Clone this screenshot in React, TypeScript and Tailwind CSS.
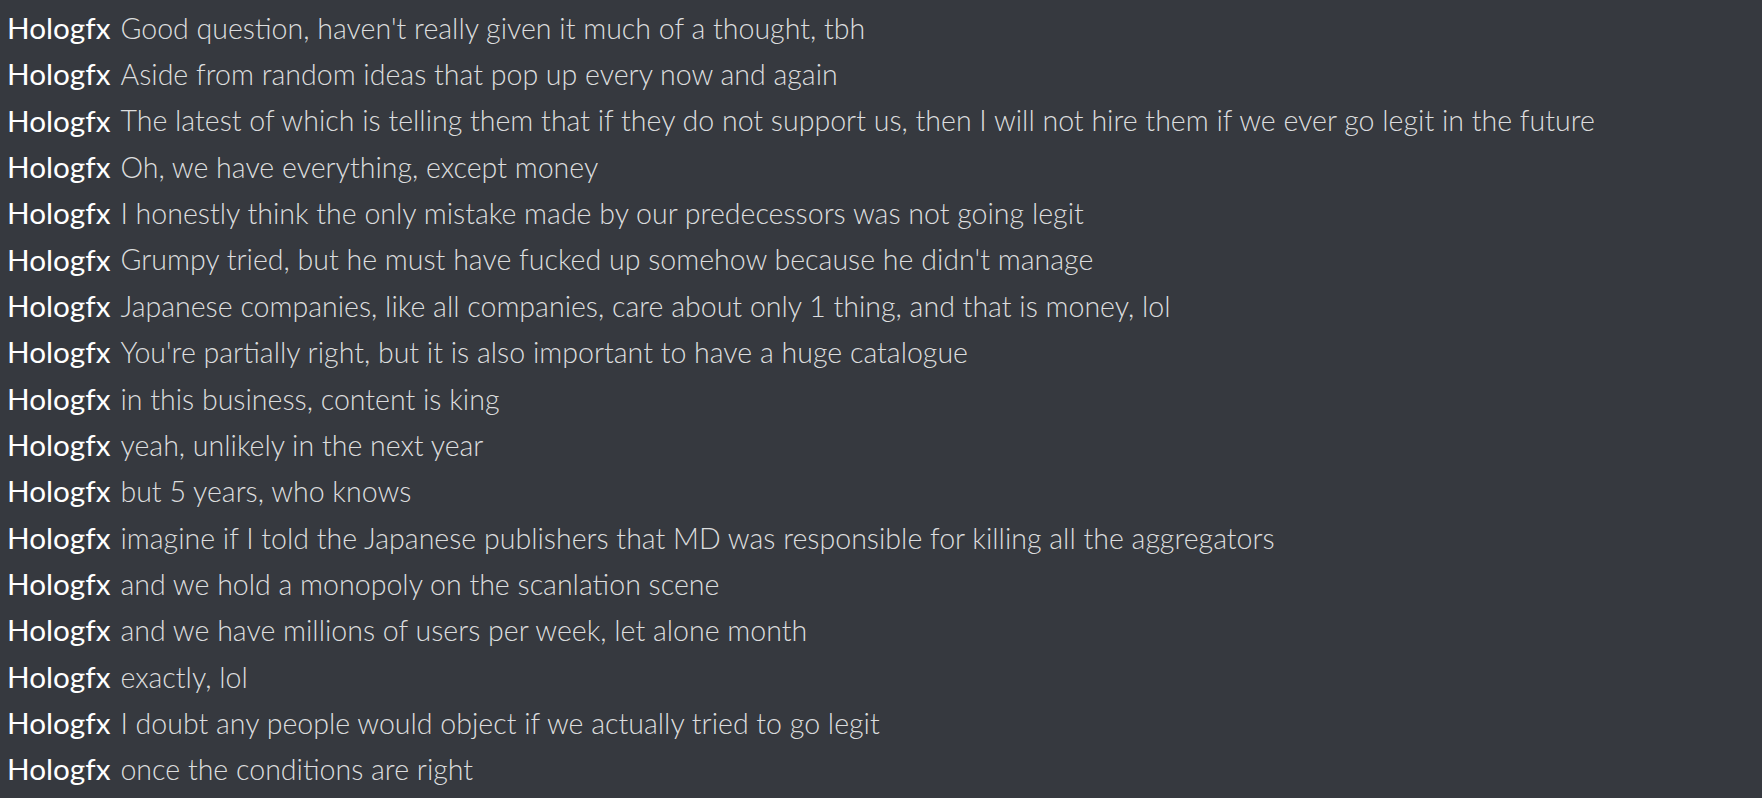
import React from 'react';

const messages: string[] = [
    "Good question, haven't really given it much of a thought, tbh",
    'Aside from random ideas that pop up every now and again',
    'The latest of which is telling them that if they do not support us, then I will not hire them if we ever go legit in the future',
    'Oh, we have everything, except money',
    'I honestly think the only mistake made by our predecessors was not going legit',
    "Grumpy tried, but he must have fucked up somehow because he didn't manage",
    'Japanese companies, like all companies, care about only 1 thing, and that is money, lol',
    "You're partially right, but it is also important to have a huge catalogue",
    'in this business, content is king',
    'yeah, unlikely in the next year',
    'but 5 years, who knows',
    'imagine if I told the Japanese publishers that MD was responsible for killing all the aggregators',
    'and we hold a monopoly on the scanlation scene',
    'and we have millions of users per week, let alone month',
    'exactly, lol',
    'I doubt any people would object if we actually tried to go legit',
    'once the conditions are right',
];

export default function App() {
    return (
        <div className="min-h-screen w-full bg-[#36393f] pt-[5px] pl-[7px] font-['Lato',sans-serif]">
            {messages.map((msg, i) => (
                <div key={i} className="flex h-[46.35px] items-center whitespace-nowrap">
                    <span className="text-[29.7px] font-normal text-white">Hologfx</span>
                    <span className="ml-[10px] text-[28.55px] font-light text-[#dcddde]">{msg}</span>
                </div>
            ))}
        </div>
    );
}
